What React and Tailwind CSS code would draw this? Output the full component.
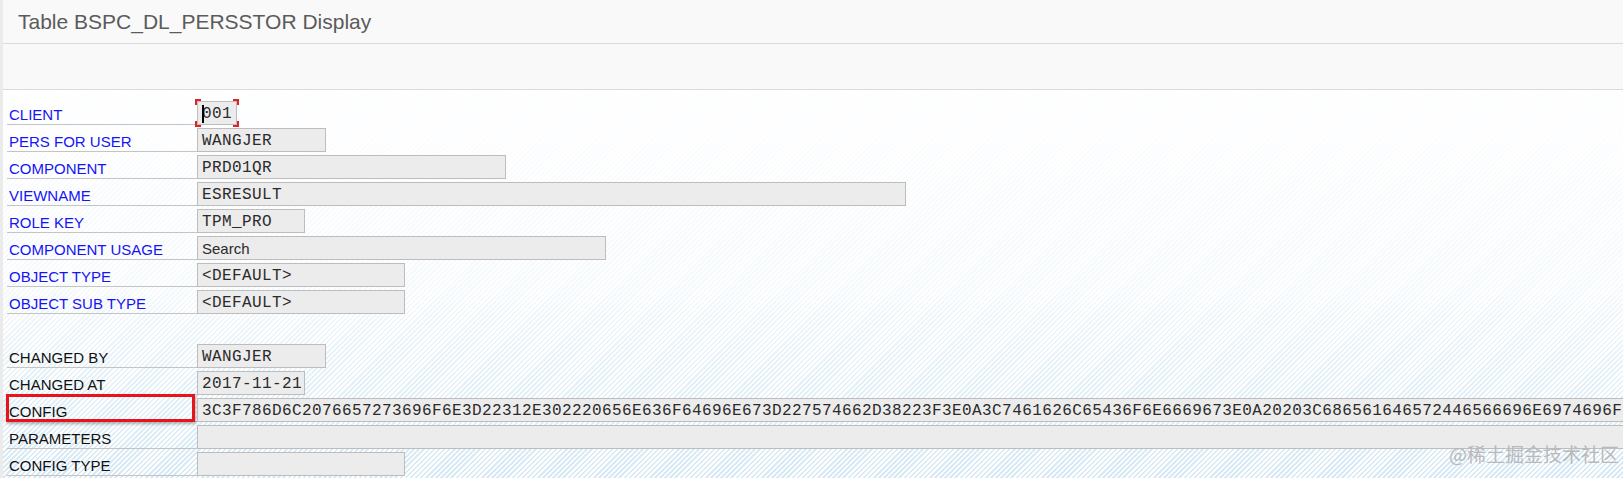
const rows = [
  { label: "CLIENT", value: "001", width: "w-[40px]", blue: true, focus: true },
  { label: "PERS FOR USER", value: "WANGJER", width: "w-[129px]", blue: true },
  { label: "COMPONENT", value: "PRD01QR", width: "w-[309px]", blue: true },
  { label: "VIEWNAME", value: "ESRESULT", width: "w-[709px]", blue: true },
  { label: "ROLE KEY", value: "TPM_PRO", width: "w-[108px]", blue: true },
  { label: "COMPONENT USAGE", value: "Search", width: "w-[409px]", blue: true, plain: true },
  { label: "OBJECT TYPE", value: "<DEFAULT>", width: "w-[208px]", blue: true },
  { label: "OBJECT SUB TYPE", value: "<DEFAULT>", width: "w-[208px]", blue: true },
  null,
  { label: "CHANGED BY", value: "WANGJER", width: "w-[129px]" },
  { label: "CHANGED AT", value: "2017-11-21", width: "w-[108px]" },
  {
    label: "CONFIG",
    value:
      "3C3F786D6C2076657273696F6E3D22312E302220656E636F64696E673D227574662D38223F3E0A3C7461626C65436F6E6669673E0A20203C686561646572446566696E6974696F6E3E0A2020",
    width: "flex-1 border-r-0",
    marked: true,
  },
  { label: "PARAMETERS", value: "", width: "flex-1 border-r-0" },
  { label: "CONFIG TYPE", value: "", width: "w-[208px]" },
];

const Corner = ({ className }) => <span className={`absolute h-[6px] w-[6px] border-[#e02424] ${className}`} />;

const Field = ({ row }) => (
  <div
    className={`relative h-[24px] shrink-0 overflow-hidden whitespace-nowrap border border-[#bdbdbd] bg-[#ececec] pl-[4px] text-[#2b2b2b] ${row.width} ${
      row.plain
        ? "font-['Liberation_Sans',sans-serif] text-[15px] leading-[24px]"
        : "font-['Liberation_Mono',monospace] text-[16px] leading-[25px] tracking-[0.4px]"
    }`}
  >
    {row.value}
    {row.focus && <span className="absolute left-[4px] top-[3px] h-[18px] w-[2px] bg-black" />}
  </div>
);

const Row = ({ row }) => {
  if (!row) return <div className="h-[27px]" />;
  return (
    <div className="flex h-[27px] items-start">
      <div
        className={`relative h-[24px] w-[190px] shrink-0 border-b border-[#c4c4c4] pl-[2px] text-[15px] leading-[27px] ${
          row.blue ? "text-[#1414f5]" : "text-[#111]"
        }`}
      >
        {row.label}
        {row.marked && (
          <span className="absolute -left-[1px] -top-[4px] h-[28px] w-[189px] border-[3px] border-[#e8141b] shadow-[1px_2px_3px_rgba(0,0,0,0.3)]" />
        )}
      </div>
      {row.focus ? (
        <div className="relative">
          <Field row={row} />
          <span className="pointer-events-none absolute -left-[2px] -right-[2px] -top-[2px] -bottom-[2px]">
            <Corner className="left-0 top-0 border-l-2 border-t-2" />
            <Corner className="right-0 top-0 border-r-2 border-t-2" />
            <Corner className="bottom-0 left-0 border-b-2 border-l-2" />
            <Corner className="bottom-0 right-0 border-b-2 border-r-2" />
          </span>
        </div>
      ) : (
        <Field row={row} />
      )}
    </div>
  );
};

export default function App() {
  return (
    <div className="relative h-[478px] w-[1623px] overflow-hidden border-l-[3px] border-[#ebebeb] bg-white font-['Liberation_Sans',sans-serif]">
      <div className="flex h-[44px] items-center border-b border-[#dadada] bg-[#f9f9f9] pl-[15px] pt-[1px] text-[21px] text-[#5b5b5b]">
        Table BSPC_DL_PERSSTOR Display
      </div>
      <div className="h-[46px] border-b border-[#dadada] bg-[#f9f9f9]" />

      <div className="h-[388px] bg-[repeating-linear-gradient(135deg,#d6e9f5_0px,#d6e9f5_1.8px,#ffffff_1.8px,#ffffff_3.6px)]">
        <div className="h-full bg-linear-to-b from-white/95 via-white/75 to-white/0 pl-[4px] pt-[11px]">
          {rows.map((row, i) => (
            <Row key={i} row={row} />
          ))}
        </div>
      </div>

      <div className="absolute bottom-[10px] right-[4px] font-['Noto_Sans_CJK_SC',sans-serif] text-[19px] text-[#b9b9b9]">
        @稀土掘金技术社区
      </div>
    </div>
  );
}
